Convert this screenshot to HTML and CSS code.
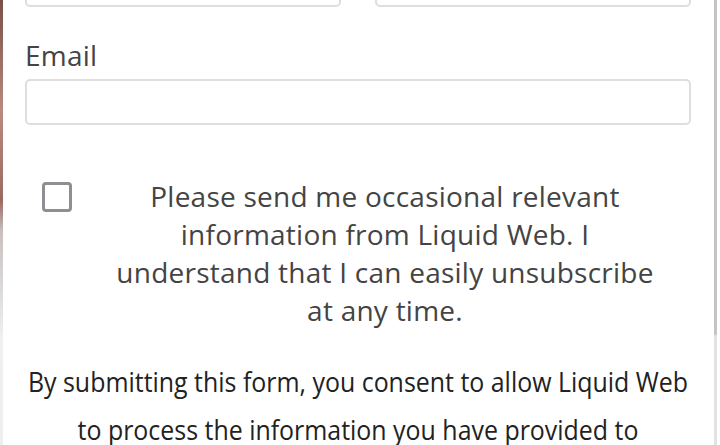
FILE: index.html
```html
<!DOCTYPE html>
<html lang="en">
<head>
    <meta charset="UTF-8">
    <meta name="viewport" content="width=device-width, initial-scale=1.0">
    <title>Contact Liquid Web</title>
    <link rel="stylesheet" href="styles.css">
</head>
<body>
    <div class="page">
        <div class="backdrop"></div>
        <div class="modal">
            <div class="name-row">
                <input type="text" class="field">
                <input type="text" class="field">
            </div>
            <label class="field-label" for="email">Email</label>
            <input type="email" id="email" class="field">
            <div class="optin">
                <span class="checkbox"></span>
                <p class="optin-text">Please send me occasional relevant information from Liquid Web. I understand that I can easily unsubscribe at any time.</p>
            </div>
            <div class="consent-wrap">
                <p class="consent">By submitting this form, you consent to allow Liquid Web to process the information you have provided to</p>
            </div>
        </div>
        <div class="scroll-edge"></div>
    </div>
</body>
</html>
```

FILE: styles.css
```css
body {
    margin: 0;
    padding: 0;
    font-family: "Open Sans", "Noto Sans", sans-serif;
    background-color: #fff;
    overflow: hidden;
}
.page {
    display: flex;
    height: 445px;
    overflow: hidden;
}
.backdrop {
    width: 3px;
    flex-shrink: 0;
    background: linear-gradient(to bottom, #7a5048 0%, #b88a80 25%, #9a6a60 45%, #c8c0be 52%, #e4e4e4 70%, #f0f0f0 76%, #eeeeee 100%);
}
.modal {
    flex: 1;
    min-width: 0;
    padding: 0 23px 0 22px;
    background: #fff;
}
.name-row {
    display: grid;
    grid-template-columns: 1fr 1fr;
    gap: 34px;
    margin-top: -39px;
}
.field {
    display: block;
    box-sizing: border-box;
    width: 100%;
    height: 46px;
    margin: 0;
    border: 2px solid #dedede;
    border-radius: 5px;
    background: #fff;
}
.field-label {
    display: block;
    margin-top: 30px;
    margin-bottom: 6px;
    font-size: 28px;
    letter-spacing: 0.2px;
    line-height: 36px;
    color: #444;
}
.optin {
    display: flex;
    align-items: flex-start;
    margin-top: 52px;
}
.checkbox {
    width: 30px;
    height: 30px;
    box-sizing: border-box;
    flex-shrink: 0;
    margin: 5px 0 0 17px;
    border: 3px solid #8e8e93;
    border-radius: 4px;
}
.optin-text {
    width: 540px;
    margin: 0 0 0 43px;
    font-size: 28px;
    letter-spacing: 0.24px;
    line-height: 38px;
    text-align: center;
    color: #444;
}
.consent-wrap {
    display: flex;
    justify-content: center;
    margin-top: 28px;
}
/* condensed look: normal Open Sans squeezed horizontally */
.consent {
    flex-shrink: 0;
    width: 748px;
    margin: 0;
    font-size: 28px;
    line-height: 48px;
    text-align: center;
    color: #222;
    transform: scaleX(0.89);
}
.scroll-edge {
    width: 3px;
    flex-shrink: 0;
    margin-right: 3px;
    background: linear-gradient(to bottom, #c4c4c4 0%, #c4c4c4 75%, #e2e2e2 75.5%, #e2e2e2 100%);
}
```
